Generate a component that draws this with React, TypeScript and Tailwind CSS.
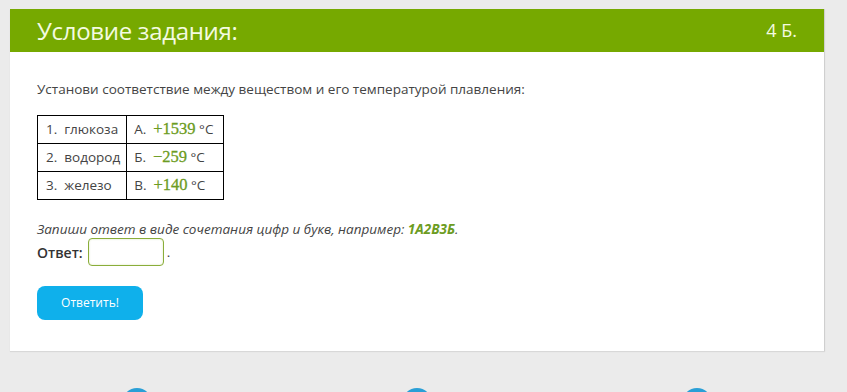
import React from "react";

function Num({ children }: { children: React.ReactNode }) {
  return (
    <span className="text-[16.5px] text-[#6c9c22]" style={{ fontFamily: '"Liberation Serif", "DejaVu Serif", serif', WebkitTextStroke: "0.3px #6c9c22" }}>
      {children}
    </span>
  );
}

export default function App() {
  const rows = [
    ["1.", "глюкоза", "А.", "+1539"],
    ["2.", "водород", "Б.", "−259"],
    ["3.", "железо", "В.", "+140"],
  ];
  return (
    <div
      className="w-[847px] h-[392px] bg-[#ebebeb] overflow-hidden relative"
      style={{ fontFamily: '"Open Sans", "Liberation Sans", sans-serif' }}
    >
      <div className="pt-[9px] pl-[10px] w-[825px]">
        <div className="bg-white border-r border-[#cfcfcf] shadow-[0_1px_1px_rgba(0,0,0,0.08)]">
          <div className="h-[43px] bg-[#76a900] flex items-center justify-between pl-[27px] pr-[27px] text-[#f4fbe0]">
            <span className="text-[24px] font-normal tracking-[-0.3px]">Условие задания:</span>
            <span className="text-[18px] font-normal">4 Б.</span>
          </div>
          <div className="px-[27px] pt-[27px] pb-[31px] text-[#444] text-[13.5px]">
            <p className="leading-[20px]">Установи соответствие между веществом и его температурой плавления:</p>
            <table className="mt-[16px] border-collapse border border-black text-[13.5px] text-[#444]">
              <tbody>
                {rows.map((r) => (
                  <tr key={r[0]} className="h-[28px]">
                    <td className="border border-black pl-[8px] pr-[6px] whitespace-nowrap">
                      {r[0]}&nbsp;&nbsp;{r[1]}
                    </td>
                    <td className="border border-black pl-[7px] pr-[2px] whitespace-nowrap w-[97px]">
                      {r[2]}&nbsp;&nbsp;<Num>{r[3]}</Num> °C
                    </td>
                  </tr>
                ))}
              </tbody>
            </table>
            <p className="mt-[19px] italic leading-[20px]">
              Запиши ответ в виде сочетания цифр и букв, например:{" "}
              <b className="text-[#6c9c22] font-bold italic">1А2В3Б</b>.
            </p>
            <div className="flex items-center -mt-[1px]">
              <span className="font-semibold text-[#333] text-[14px]">Ответ:</span>
              <div className="ml-[5px] w-[76px] h-[28px] rounded-[4px] border border-[#8aad3a] bg-white shadow-[inset_0_0_2px_rgba(118,169,0,0.3)]" />
              <span className="ml-[3px]">.</span>
            </div>
            <button className="mt-[20px] w-[106px] h-[34px] rounded-[8px] bg-[#0fb0eb] text-white text-[12px]">
              Ответить!
            </button>
          </div>
        </div>
      </div>
      <div className="absolute left-0 right-0 top-[388px] flex">
        <div className="absolute left-[122px] w-[30px] h-[30px] rounded-full bg-[#2a9fd6]" />
        <div className="absolute left-[402px] w-[30px] h-[30px] rounded-full bg-[#2a9fd6]" />
        <div className="absolute left-[682px] w-[30px] h-[30px] rounded-full bg-[#2a9fd6]" />
      </div>
    </div>
  );
}
